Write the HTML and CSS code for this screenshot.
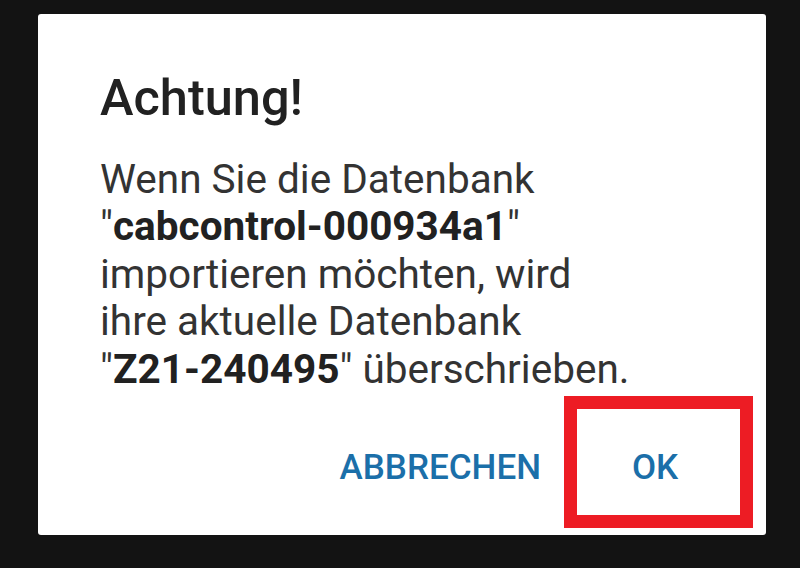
FILE: index.html
```html
<!DOCTYPE html>
<html lang="de">
<head>
<meta charset="utf-8">
<link rel="stylesheet" href="styles.css">
</head>
<body>
<div class="screen">
  <div class="dialog">
    <h1 class="title">Achtung!</h1>
    <p class="message">Wenn Sie die Datenbank<br>"<b>cabcontrol-000934a1</b>"<br>importieren möchten, wird<br>ihre aktuelle Datenbank<br>"<b>Z21-240495</b>" überschrieben.</p>
    <div class="actions">
      <button class="btn">ABBRECHEN</button>
      <button class="btn btn-ok">OK<span class="highlight"></span></button>
    </div>
  </div>
</div>
</body>
</html>
```
FILE: styles.css
```css
html, body {
  margin: 0;
  padding: 0;
  background: #131313;
}
.screen {
  width: 800px;
  height: 568px;
  box-sizing: border-box;
  padding: 14px 34px 0 38px;
}
.dialog {
  width: 728px;
  height: 521px;
  box-sizing: border-box;
  background: #fff;
  border-radius: 3px;
  padding: 57px 0 0 62px;
  display: flex;
  flex-direction: column;
  font-family: Roboto, "Noto Sans", sans-serif;
}
.title {
  margin: 0;
  font-size: 50.5px;
  font-weight: 500;
  line-height: 54px;
  color: #212121;
}
.message {
  margin: 30.5px 0 0 0;
  font-size: 40.5px;
  line-height: 47.5px;
  color: #333;
}
.message b {
  font-weight: 700;
  color: #212121;
}
.actions {
  display: flex;
  justify-content: flex-end;
  align-items: center;
  gap: 39px;
  margin-top: 45px;
  padding-right: 36px;
}
.btn {
  position: relative;
  border: 0;
  background: transparent;
  font-family: Roboto, "Noto Sans", sans-serif;
  font-size: 35px;
  font-weight: 500;
  color: #1b6fa9;
  padding: 10px 0;
  line-height: 40px;
}
.btn-ok {
  width: 150px;
}
.highlight {
  position: absolute;
  left: -16px;
  top: -42px;
  width: 189px;
  height: 132px;
  box-sizing: border-box;
  border: 13px solid #ed1c24;
}
```
